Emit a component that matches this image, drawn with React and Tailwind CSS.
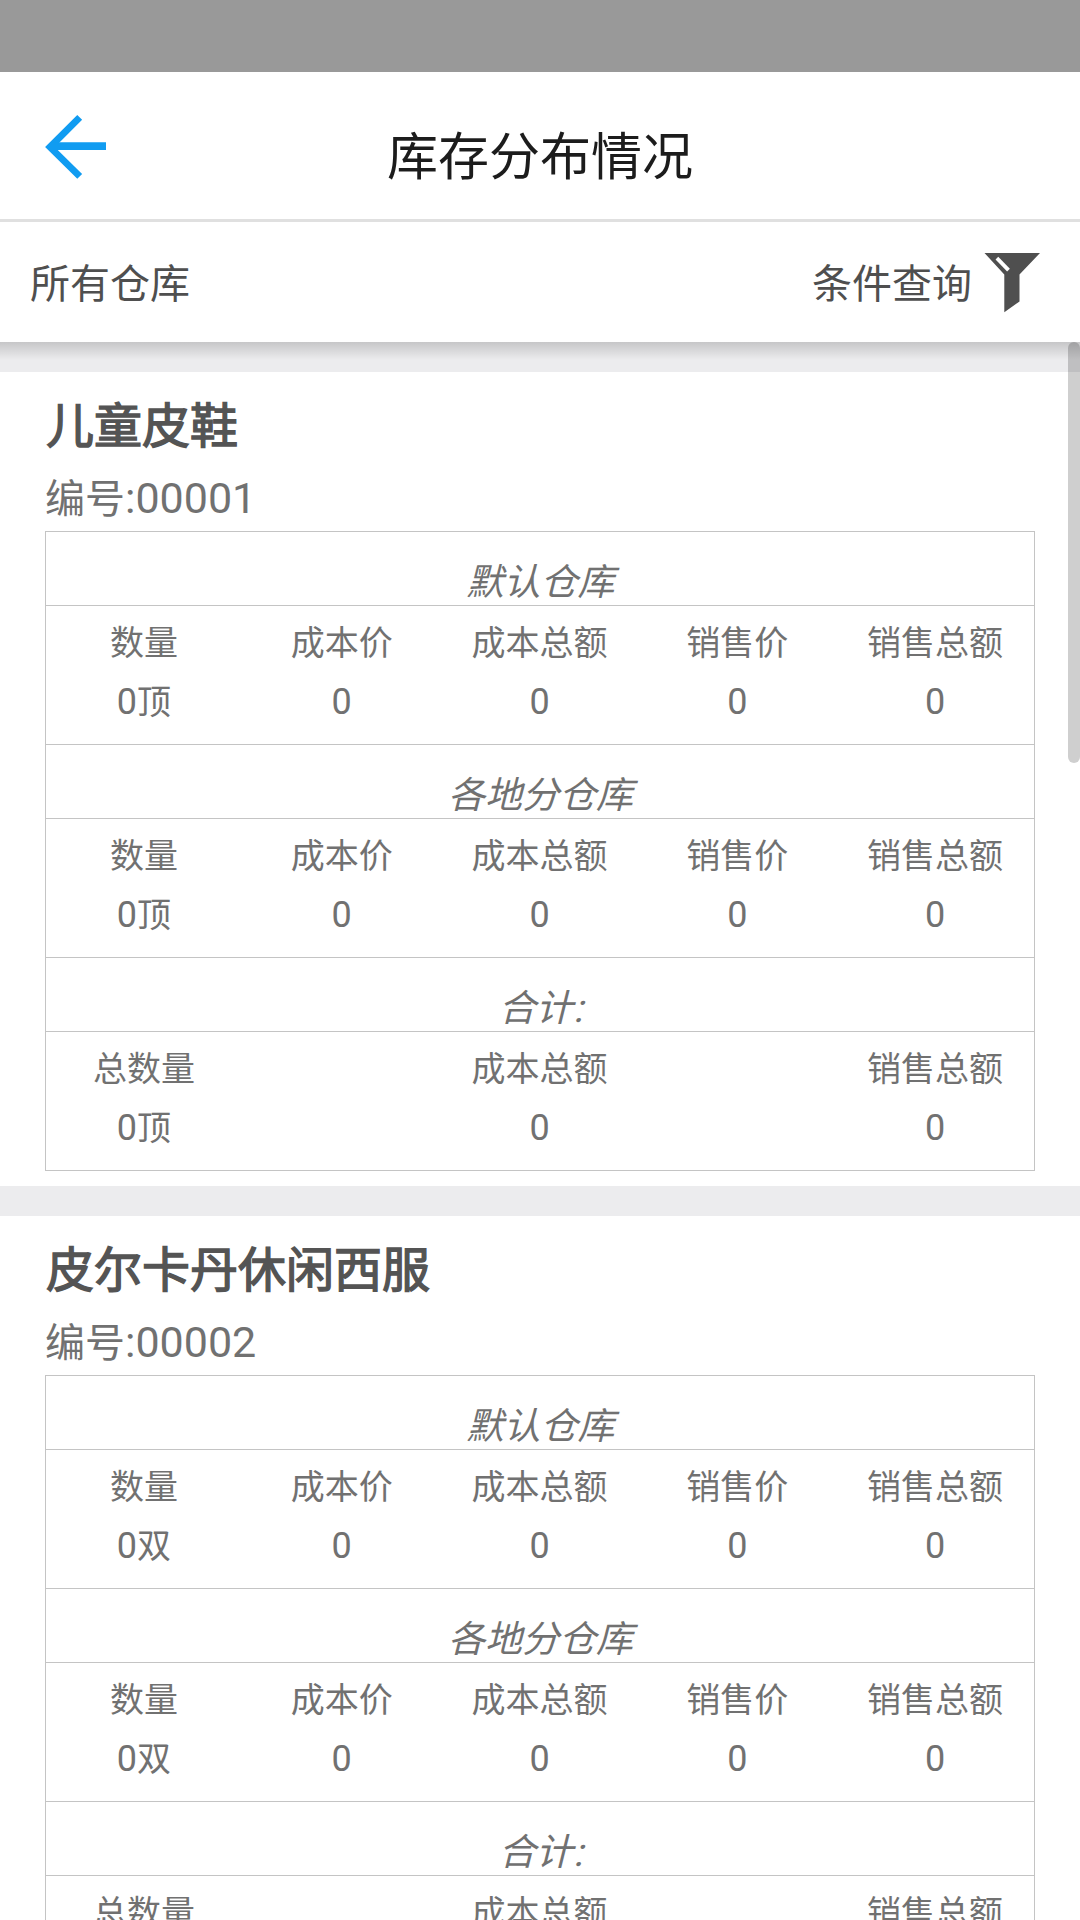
const PRODUCTS = [
  { name: '儿童皮鞋', code: '00001', unit: '顶' },
  { name: '皮尔卡丹休闲西服', code: '00002', unit: '双' },
];

const DETAIL = ['数量', '成本价', '成本总额', '销售价', '销售总额'];
const TOTAL = ['总数量', '', '成本总额', '', '销售总额'];
const SECTIONS = [
  { title: '默认仓库', labels: DETAIL },
  { title: '各地分仓库', labels: DETAIL },
  { title: '合计', suffix: ':', labels: TOTAL },
];

function BackArrow() {
  return (
    <svg className="block h-[66px] w-[64px]" viewBox="0 0 64 66" fill="none" stroke="#119cf1">
      <path d="M34.7 3.4 5 33.1 34.7 62.4" strokeWidth="6.9" />
      <path d="M6 32.1H61" strokeWidth="7.8" />
    </svg>
  );
}

function Funnel() {
  return (
    <svg className="block h-[60px] w-[56px]" viewBox="0 0 56 60">
      <path d="M.5 0H56L35.5 21.5V48.5L20.3 59.3V21.5Z" fill="#4f4f4f" />
      <path d="M12.9 5.2 24.5 17.1" stroke="#fff" strokeWidth="3.8" />
    </svg>
  );
}

function Section({ title, suffix, labels, unit }) {
  return (
    <section className="border-b border-[#c4c4c4]">
      <h3 className="flex h-[74px] justify-center border-b border-[#c4c4c4] pt-[27px] pl-px text-[37px] leading-[48px] italic">
        {title}
        {suffix && <span className="origin-[50%_38px] -skew-x-14 text-[40px] not-italic">{suffix}</span>}
      </h3>
      <div className="-ml-px grid h-[138px] grid-cols-5 pt-[12px] text-center">
        {labels.map((label, i) => (
          <div key={i}>
            {label && (
              <>
                <div className="text-[34px] leading-[50px]">{label}</div>
                <div className="mt-[9px] text-[34px] leading-[50px]">
                  <span className="text-[36px]">0</span>
                  {i === 0 && unit}
                </div>
              </>
            )}
          </div>
        ))}
      </div>
    </section>
  );
}

function Card({ name, code, unit }) {
  return (
    <article className="mt-[30px] h-[814px] shrink-0 bg-white px-[45px] pt-[23px]">
      <h2 className="pl-px text-[48px] leading-[64px] text-[#545454] [-webkit-text-stroke:1.4px_#545454]">{name}</h2>
      <div className="mt-[13px] h-[59px] text-[40px] leading-[52px]">
        编号<span className="text-[43px]">:{code}</span>
      </div>
      <div className="border-x border-t border-[#c4c4c4]">
        {SECTIONS.map((s) => (
          <Section key={s.title} {...s} unit={unit} />
        ))}
      </div>
    </article>
  );
}

export default function App() {
  return (
    <div
      lang="zh-CN"
      className="flex h-[1920px] w-[1080px] flex-col overflow-hidden bg-[#ececee] font-[Roboto,'Noto_Sans_CJK_SC',sans-serif] text-[#717171]"
    >
      <div className="h-[72px] shrink-0 bg-[#999999]" />
      <header className="grid h-[150px] shrink-0 grid-cols-[1fr_auto_1fr] border-b-[3px] border-[#e0e0e0] bg-white">
        <div className="pt-[42px] pl-[45px]">
          <BackArrow />
        </div>
        <h1 className="pt-[54px] text-[51px] leading-[64px] text-[#1c1c1c]">库存分布情况</h1>
      </header>
      <div className="flex h-[120px] shrink-0 justify-between bg-white pr-[40px] pl-[30px] text-[40px] leading-[126px] text-[#4f4f4f]">
        <span>所有仓库</span>
        <div className="flex gap-[12px]">
          <span>条件查询</span>
          <div className="pt-[31px]">
            <Funnel />
          </div>
        </div>
      </div>
      <main className="relative flex h-[1578px] shrink-0 flex-col overflow-hidden">
        {PRODUCTS.map((p) => (
          <Card key={p.code} {...p} />
        ))}
        <div className="absolute top-0 right-0 h-[421px] w-[12px] rounded-full bg-black/19" />
        <div className="absolute inset-x-0 top-0 h-[18px] bg-gradient-to-b from-black/16 to-transparent" />
      </main>
    </div>
  );
}
